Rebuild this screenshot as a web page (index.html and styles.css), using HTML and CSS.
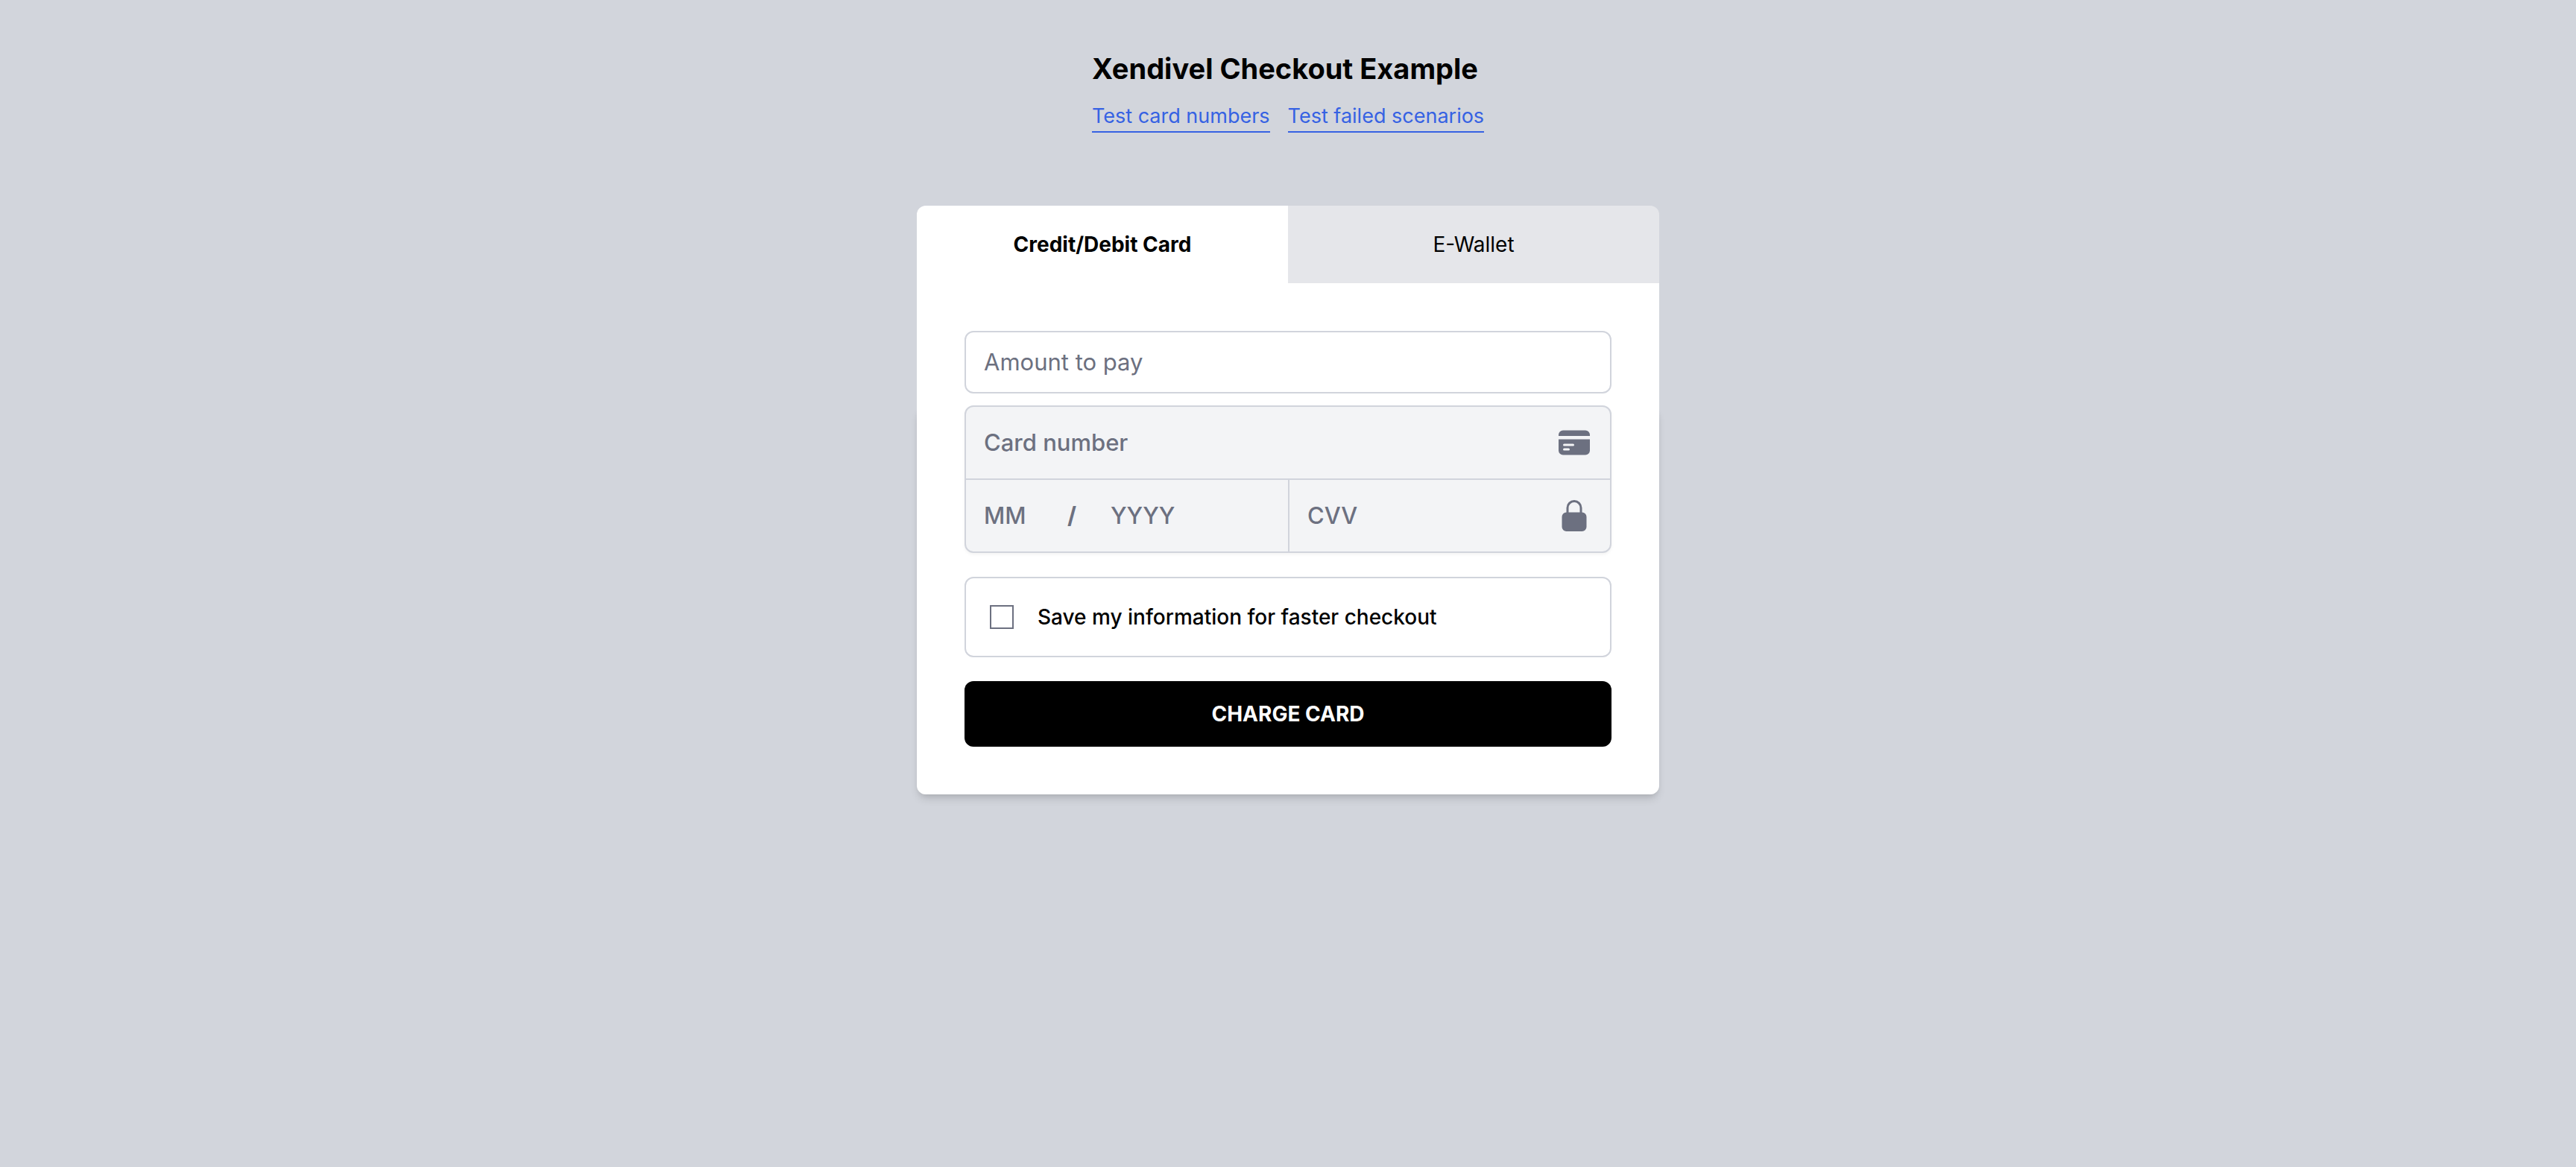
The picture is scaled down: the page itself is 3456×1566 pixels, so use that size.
FILE: index.html
```html
<!DOCTYPE html>
<html lang="en">
<head>
<meta charset="utf-8">
<meta name="viewport" content="width=device-width, initial-scale=1">
<title>Xendivel Checkout Example</title>
<link rel="stylesheet" href="styles.css">
</head>
<body>
<main class="page">
  <header class="intro">
    <h1 class="title">Xendivel Checkout Example</h1>
    <nav class="links">
      <a class="link" href="#cards">Test card numbers</a>
      <a class="link" href="#failed">Test failed scenarios</a>
    </nav>
  </header>

  <section class="checkout">
    <div class="tabs" role="tablist">
      <button class="tab tab-active" type="button" role="tab" aria-selected="true">Credit/Debit Card</button>
      <button class="tab" type="button" role="tab" aria-selected="false">E-Wallet</button>
    </div>

    <form class="panel">
      <input class="field amount" type="text" placeholder="Amount to pay" aria-label="Amount to pay">

      <div class="card-group">
        <div class="card-row">
          <input class="field" type="text" placeholder="Card number" aria-label="Card number">
          <svg class="icon" viewBox="0 0 48 48" aria-hidden="true">
            <path d="M3 15V13.500a6 6 0 0 1 6-6h30a6 6 0 0 1 6 6V15z"/>
            <path fill-rule="evenodd" d="M3 19.500h42v15a6 6 0 0 1-6 6H9a6 6 0 0 1-6-6zM10.500 25.500a1.500 1.500 0 0 0 0 3h12a1.500 1.500 0 0 0 0-3zM10.500 31.500a1.500 1.500 0 0 0 0 3h6a1.500 1.500 0 0 0 0-3z"/>
          </svg>
        </div>
        <div class="card-split">
          <div class="card-row">
            <input class="field month" type="text" placeholder="MM" aria-label="Expiry month">
            <span class="slash">/</span>
            <input class="field" type="text" placeholder="YYYY" aria-label="Expiry year">
          </div>
          <div class="card-row cvv">
            <input class="field" type="text" placeholder="CVV" aria-label="CVV">
            <svg class="icon" viewBox="0 0 48 48" aria-hidden="true">
              <path fill-rule="evenodd" d="M24 3A10.500 10.500 0 0 0 13.500 13.500v6a6 6 0 0 0-6 6v13.500a6 6 0 0 0 6 6h21a6 6 0 0 0 6-6V25.500a6 6 0 0 0-6-6v-6A10.500 10.500 0 0 0 24 3zm7.500 16.500v-6a7.500 7.500 0 0 0-15 0v6z"/>
            </svg>
          </div>
        </div>
      </div>

      <label class="save">
        <input class="check" type="checkbox">
        <span>Save my information for faster checkout</span>
      </label>

      <button class="charge" type="submit">CHARGE CARD</button>
    </form>
  </section>
</main>
</body>
</html>
```
FILE: styles.css
```css
*, *::before, *::after { box-sizing: border-box; }

body {
  margin: 0;
  min-height: 100vh;
  background: #d2d5dc;
  color: #000;
  font-family: Inter, "Liberation Sans", sans-serif;
  font-size: 28px;
  line-height: 40px;
}

button, input { font: inherit; color: inherit; }

.page {
  display: flex;
  flex-direction: column;
  align-items: center;
  padding: 64px 32px;
}

.intro { margin-bottom: 98px; }

.title {
  margin: 0 0 16px;
  font-size: 38px;
  line-height: 56px;
  font-weight: 700;
}

.links { display: flex; gap: 24px; }

.link {
  border-bottom: 2px solid #3662e3;
  color: #3662e3;
  font-size: 27px;
  text-decoration: none;
}

.checkout {
  position: relative;
  isolation: isolate;
  width: 100%;
  max-width: 996px;
}

/* Shadow sits behind the lower part of the card only */
.checkout::before {
  content: "";
  position: absolute;
  z-index: -1;
  inset: 268px 0 0;
  border-radius: 12px;
  box-shadow: 0 8px 12px -2px rgb(0 0 0 / 0.12), 0 4px 8px -4px rgb(0 0 0 / 0.12);
}

.tabs {
  display: grid;
  grid-template-columns: 1fr 1fr;
  overflow: hidden;
  border-radius: 12px 12px 0 0;
}

.tab {
  padding: 32px;
  border: 0;
  background: #e5e6ea;
}

.tab-active { background: #fff; font-weight: 700; }

.panel {
  display: flex;
  flex-direction: column;
  gap: 32px;
  padding: 64px;
  border-radius: 0 0 12px 12px;
  background: #fff;
}

.field {
  flex: 1;
  min-width: 0;
  padding: 0;
  border: 0;
  outline: 0;
  background: transparent;
  font-size: 31px;
  line-height: 48px;
  font-weight: 500;
}

.field::placeholder { color: #6c7080; opacity: 1; }

.amount {
  flex: none;
  margin-bottom: -16px;
  padding: 16px 24px;
  border: 2px solid #d1d4dc;
  border-radius: 12px;
  font-weight: 400;
}

.card-group {
  border: 2px solid #d1d4dc;
  border-radius: 12px;
  background: #f3f4f6;
  box-shadow: 0 2px 4px rgb(0 0 0 / 0.05);
}

.card-row {
  display: flex;
  align-items: center;
  padding: 24px;
}

.card-split {
  display: grid;
  grid-template-columns: repeat(2, minmax(0, 1fr));
  border-top: 2px solid #d1d4dc;
}

.cvv { border-left: 2px solid #d1d4dc; }

.month { flex: 0 0 112px; }

.slash {
  width: 58px;
  color: #6c7080;
  font-size: 31px;
  line-height: 48px;
  font-weight: 700;
}

.icon { width: 48px; height: 48px; fill: #6c7080; }

.save {
  display: flex;
  align-items: center;
  gap: 32px;
  padding: 32px;
  border: 2px solid #d1d4dc;
  border-radius: 12px;
  font-weight: 500;
}

.check {
  appearance: none;
  width: 32px;
  height: 32px;
  margin: 0;
  border: 2px solid #6c7080;
  background: #fff;
}

.check:checked { background: #3662e3; }

.charge {
  padding: 24px;
  border: 0;
  border-radius: 12px;
  background: #000;
  color: #fff;
  font-weight: 700;
}
```
